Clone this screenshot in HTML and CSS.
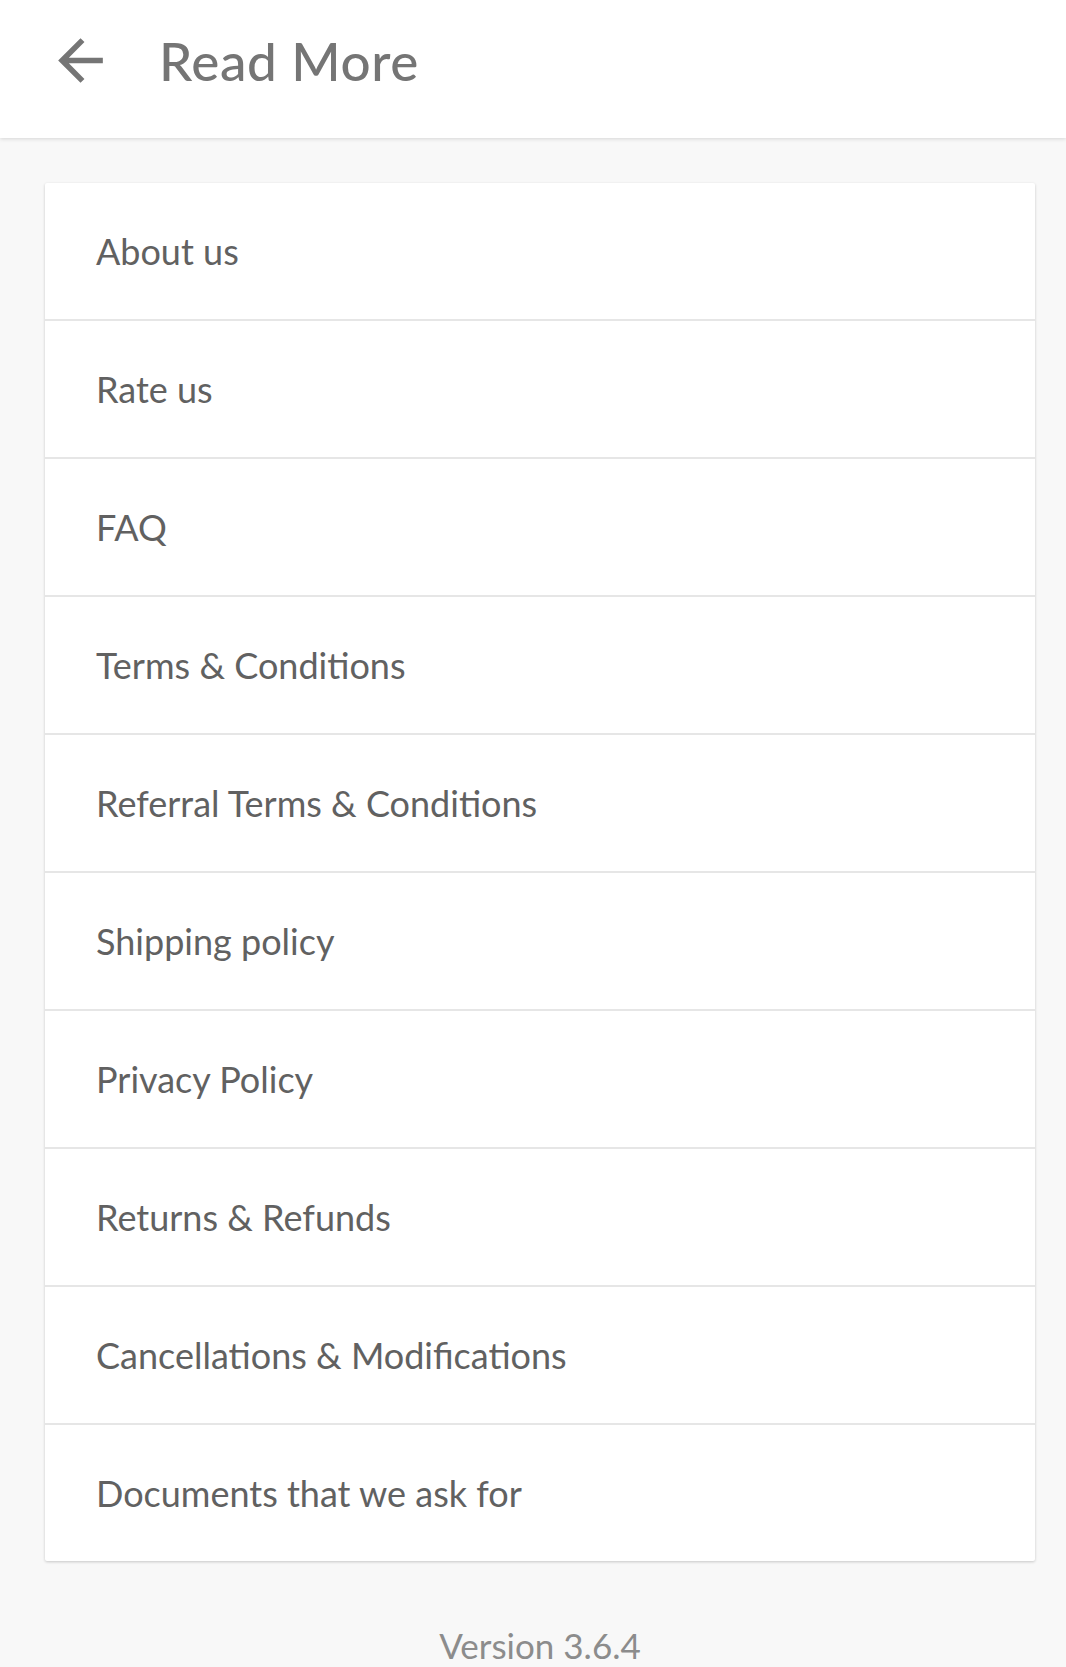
FILE: index.html
```html
<!DOCTYPE html>
<html>
<head>
<meta charset="utf-8">
<link rel="stylesheet" href="styles.css">
</head>
<body>
<header class="appbar">
  <svg class="back" viewBox="0 0 24 24"><path d="M20 11H7.83l5.59-5.59L12 4l-8 8 8 8 1.41-1.41L7.83 13H20v-2z" fill="#757575"/></svg>
  <h1 class="title">Read More</h1>
</header>
<main class="content">
  <ul class="card">
    <li class="row">About us</li>
    <li class="row">Rate us</li>
    <li class="row">FAQ</li>
    <li class="row">Terms &amp; Conditions</li>
    <li class="row">Referral Terms &amp; Conditions</li>
    <li class="row">Shipping policy</li>
    <li class="row">Privacy Policy</li>
    <li class="row">Returns &amp; Refunds</li>
    <li class="row">Cancellations &amp; Modifications</li>
    <li class="row">Documents that we ask for</li>
  </ul>
  <p class="version">Version 3.6.4</p>
</main>
</body>
</html>
```
FILE: styles.css
```css
html, body {
  margin: 0;
  padding: 0;
  background: #f8f8f8;
  font-family: Lato, "Open Sans", sans-serif;
}
.appbar {
  height: 138px;
  background: #fff;
  display: flex;
  align-items: center;
  box-shadow: 0 1px 4px rgba(0,0,0,0.14);
  position: relative;
  z-index: 1;
}
.back {
  width: 67px;
  height: 67px;
  margin-left: 47px;
  margin-top: -18px;
}
.title {
  margin: 0 0 0 45px;
  margin-top: -18px;
  font-size: 53px;
  font-weight: 500;
  color: #757575;
  letter-spacing: 0.6px;
}
.content {
  padding: 45px 31px 0 45px;
}
.card {
  list-style: none;
  margin: 0;
  padding: 0;
  background: #fff;
  border-radius: 2px;
  box-shadow: 0 1px 3px rgba(0,0,0,0.2);
}
.row {
  height: 136px;
  display: flex;
  align-items: center;
  padding-left: 51px;
  font-size: 36px;
  color: #616161;
  border-bottom: 2px solid #e6e6e6;
}
.row:last-child {
  border-bottom: none;
}
.version {
  margin: 63px 0 0;
  text-align: center;
  font-size: 35px;
  color: #8c8c8c;
}
```
